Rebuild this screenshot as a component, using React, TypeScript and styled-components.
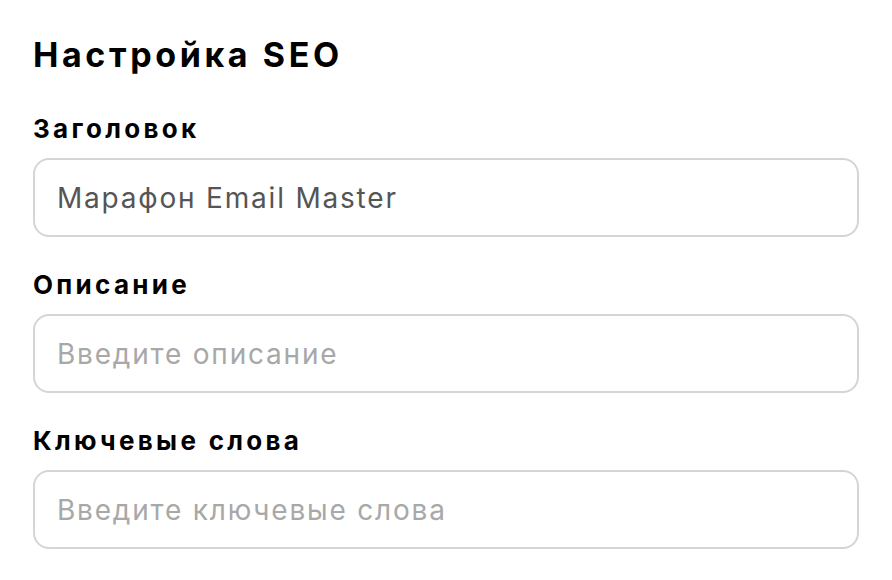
import styled, { createGlobalStyle } from "styled-components";

const GlobalStyle = createGlobalStyle`
    html, body {
        margin: 0;
        padding: 0;
        background: #ffffff;
    }
    * {
        box-sizing: border-box;
    }
`;

const Page = styled.div`
    width: 892px;
    padding: 34px 33px 0 33px;
    font-family: Inter, "Noto Sans", sans-serif;
`;

const Title = styled.h1`
    margin: 0 0 37px 0;
    font-size: 34px;
    line-height: 42px;
    font-weight: 700;
    color: #000;
    letter-spacing: 3.6px;
`;

const Field = styled.div`
    display: flex;
    flex-direction: column;
    gap: 13px;
    margin-bottom: 32px;
`;

const Label = styled.label`
    font-size: 26px;
    line-height: 32px;
    font-weight: 700;
    color: #000;
    letter-spacing: 3.3px;
`;

const Input = styled.input`
    width: 100%;
    height: 79px;
    padding: 0 22px;
    border: 2px solid #d3d6d6;
    border-radius: 16px;
    background: #fff;
    font-family: inherit;
    font-size: 28px;
    letter-spacing: 1.8px;
    color: #555555;
    outline: none;

    &::placeholder {
        color: #a8a8a8;
    }
`;

const fields = [
    { label: "Заголовок", value: "Марафон Email Master", placeholder: "" },
    { label: "Описание", value: "", placeholder: "Введите описание" },
    { label: "Ключевые слова", value: "", placeholder: "Введите ключевые слова" },
];

export default function App() {
    return (
        <>
            <GlobalStyle/>
            <Page>
                <Title>Настройка SEO</Title>
                {fields.map((f) => (
                    <Field key={f.label}>
                        <Label>{f.label}</Label>
                        <Input defaultValue={f.value} placeholder={f.placeholder}/>
                    </Field>
                ))}
            </Page>
        </>
    );
}
